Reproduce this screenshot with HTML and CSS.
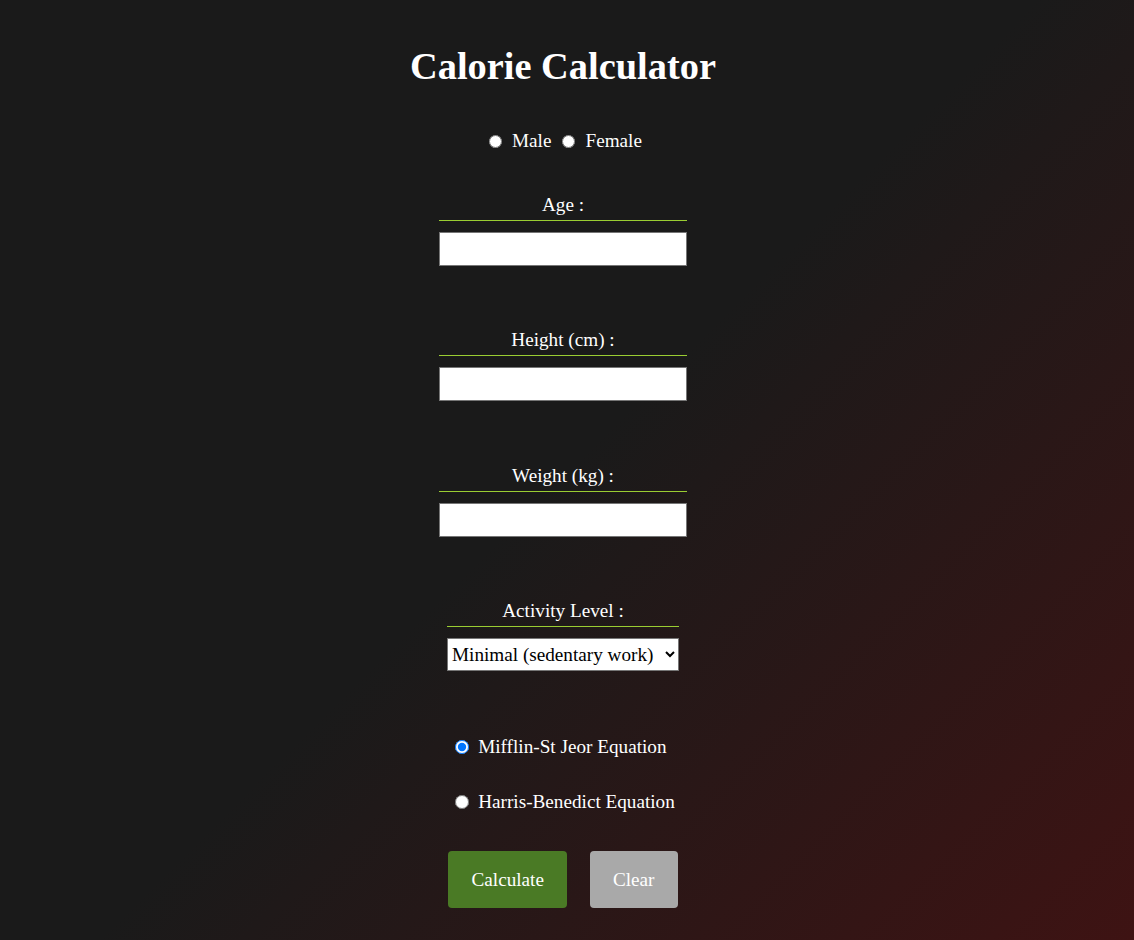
FILE: index.html
```html
<!DOCTYPE html>
<html lang="en">
<head>
<meta charset="utf-8">
<title>Calorie Calculator</title>
<link rel="stylesheet" href="styles.css">
</head>
<body>
<main class="page">
  <h1 class="title">Calorie Calculator</h1>

  <div class="gender">
    <label class="choice"><input type="radio" name="gender" value="male"><span>Male</span></label>
    <label class="choice"><input type="radio" name="gender" value="female"><span>Female</span></label>
  </div>

  <div class="field">
    <label class="field-label" for="age">Age :</label>
    <input class="text-input" id="age" type="text">
  </div>

  <div class="field">
    <label class="field-label" for="height">Height (cm) :</label>
    <input class="text-input" id="height" type="text">
  </div>

  <div class="field field-weight">
    <label class="field-label" for="weight">Weight (kg) :</label>
    <input class="text-input" id="weight" type="text">
  </div>

  <div class="field field-activity">
    <label class="field-label" for="activity">Activity Level :</label>
    <select class="select" id="activity">
      <option>Minimal (sedentary work)</option>
      <option>Light (1-3 times a week)</option>
      <option>Moderate (3-5 times a week)</option>
      <option>High (6-7 times a week)</option>
    </select>
  </div>

  <div class="equations">
    <label class="choice eq"><input type="radio" name="eq" value="mifflin" checked><span>Mifflin-St Jeor Equation</span></label>
    <label class="choice eq"><input type="radio" name="eq" value="harris"><span>Harris-Benedict Equation</span></label>
  </div>

  <div class="buttons">
    <button class="btn btn-calc" type="button">Calculate</button>
    <button class="btn btn-clear" type="button">Clear</button>
  </div>
</main>
</body>
</html>
```

FILE: styles.css
```css
html, body {
  margin: 0;
  padding: 0;
  min-height: 100%;
}

body {
  min-height: 100vh;
  background: linear-gradient(135deg, #1a1a1a 50%, #3e1313 100%);
  color: #ffffff;
  font-family: "Liberation Serif", "Times New Roman", serif;
  font-size: 19.2px;
  line-height: 22px;
  padding-right: 8px;
  box-sizing: border-box;
}

.page {
  display: flex;
  flex-direction: column;
  align-items: center;
  padding-top: 44px;
  padding-bottom: 32px;
}

.title {
  margin: 0;
  font-size: 38.4px;
  line-height: 44px;
  font-weight: bold;
}

.gender {
  display: flex;
  gap: 11px;
  margin-top: 42px;
  margin-left: 5px;
}

.choice {
  display: flex;
  align-items: center;
  gap: 10px;
}

.choice input {
  margin: 0;
  width: 13px;
  height: 13px;
}

.field {
  display: flex;
  flex-direction: column;
  align-items: stretch;
  margin-top: 42px;
}

.field + .field {
  margin-top: 63px;
}

.field + .field-weight {
  margin-top: 64px;
}

.field + .field-activity {
  margin-top: 63px;
}

.field-label {
  text-align: center;
  padding-bottom: 4px;
  border-bottom: 1px solid #9acd32;
  margin-bottom: 11px;
}

.text-input {
  box-sizing: border-box;
  width: 248px;
  height: 34px;
  margin: 0;
  border: 1px solid #767676;
  background: #ffffff;
  font: inherit;
}

.select {
  box-sizing: border-box;
  width: 232px;
  height: 33px;
  margin: 0;
  border: 1px solid #767676;
  background: #ffffff;
  color: #000000;
  font: inherit;
  border-radius: 0;
  padding: 0;
}

.equations {
  display: flex;
  flex-direction: column;
  align-items: flex-start;
  gap: 33px;
  margin-top: 65px;
  margin-left: 4px;
}

.eq {
  gap: 9px;
}

.eq input {
  width: 14px;
  height: 14px;
}

.buttons {
  display: flex;
  gap: 23px;
  margin-top: 38px;
}

.btn {
  border: none;
  border-radius: 4px;
  color: #ffffff;
  font: inherit;
  height: 57px;
  padding: 0 23px;
  cursor: pointer;
}

.btn-calc {
  background: #4a7a25;
}

.btn-clear {
  background: #a9a9a9;
}
```
